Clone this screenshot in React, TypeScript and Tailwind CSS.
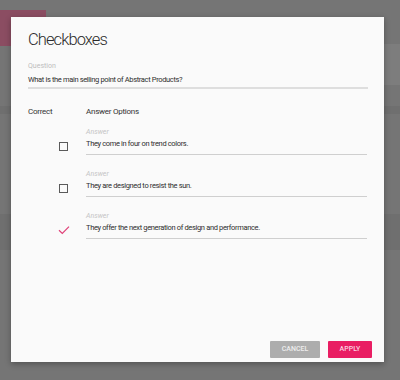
import React from 'react';

const answers = [
  { text: 'They come in four on trend colors.', correct: false },
  { text: 'They are designed to resist the sun.', correct: false },
  { text: 'They offer the next generation of design and performance.', correct: true },
];

const Box: React.FC<{ checked: boolean }> = ({ checked }) =>
  checked ? (
    <svg width="12" height="10" viewBox="0 0 12 10" className="block">
      <path d="M1 5.2 L4.3 8.4 L11 1.6" fill="none" stroke="#df3f77" strokeWidth="1.2" />
    </svg>
  ) : (
    <div className="ml-[1px] h-[9px] w-[9px] border-[1.5px] border-[#5a5a5a]" />
  );

export default function App() {
  return (
    <div
      className="relative h-[380px] w-[400px] overflow-hidden bg-[#757575]"
      style={{ fontFamily: 'Roboto, "Liberation Sans", sans-serif' }}
    >
      {/* dimmed page behind the modal */}
      <div className="flex flex-col">
        <div className="mt-[10px] h-[36px] w-[46px] bg-[#8b4d62]" />
        <div className="mt-[60px] h-[8px] w-full bg-[#6f6f6f]" />
        <div className="mt-[100px] h-[36px] w-full bg-[#6f6f6f]" />
      </div>
      <div className="absolute right-0 top-[44px] h-[41px] w-[20px] bg-[#7d7d7d]" />

      {/* modal */}
      <div className="absolute left-[11px] top-[17px] flex h-[345px] w-[373px] flex-col bg-[#fafafa] shadow-[0_2px_6px_rgba(0,0,0,0.3)]">
        <div className="px-[17px] pt-[11px]">
          <h1 className="text-[16.5px] font-light leading-[24px] tracking-[-0.9px] text-[#2b2b2b]">Checkboxes</h1>

          <div className="mt-[9px] w-[340px] border-b-2 border-[#dedede] pb-[2px]">
            <div className="text-[7px] leading-[10px] text-[#bdbdbd]">Question</div>
            <div className="mt-[4px] text-[7.5px] leading-[10px] tracking-[-0.35px] text-[#2e2e2e]">
              What is the main selling point of Abstract Products?
            </div>
          </div>

          <div className="mt-[17px] flex text-[8px] leading-[12px] tracking-[-0.25px] text-[#333]">
            <div className="w-[58px]">Correct</div>
            <div>Answer Options</div>
          </div>

          <div className="mt-[9px] flex flex-col gap-[14px]">
            {answers.map((a) => (
              <div key={a.text} className="flex items-end">
                <div className="flex w-[58px] pb-[4px] pl-[30px]">
                  <Box checked={a.correct} />
                </div>
                <div className="w-[281px] border-b border-[#cfcfcf] pb-[5px]">
                  <div className="text-[7px] italic leading-[10px] text-[#c4c4c4]">Answer</div>
                  <div className="mt-[2px] text-[7.5px] leading-[10px] tracking-[-0.35px] text-[#2e2e2e]">{a.text}</div>
                </div>
              </div>
            ))}
          </div>
        </div>

        <div className="mt-auto flex justify-end gap-[8px] pb-[4px] pr-[12px]">
          <button className="h-[17px] w-[50px] rounded-[1px] bg-[#adadad] text-[7px] font-medium text-[#eeeeee]">
            CANCEL
          </button>
          <button className="h-[17px] w-[44px] rounded-[1px] bg-[#e91e63] text-[7px] font-medium text-[#fbd3e0]">
            APPLY
          </button>
        </div>
      </div>
    </div>
  );
}
